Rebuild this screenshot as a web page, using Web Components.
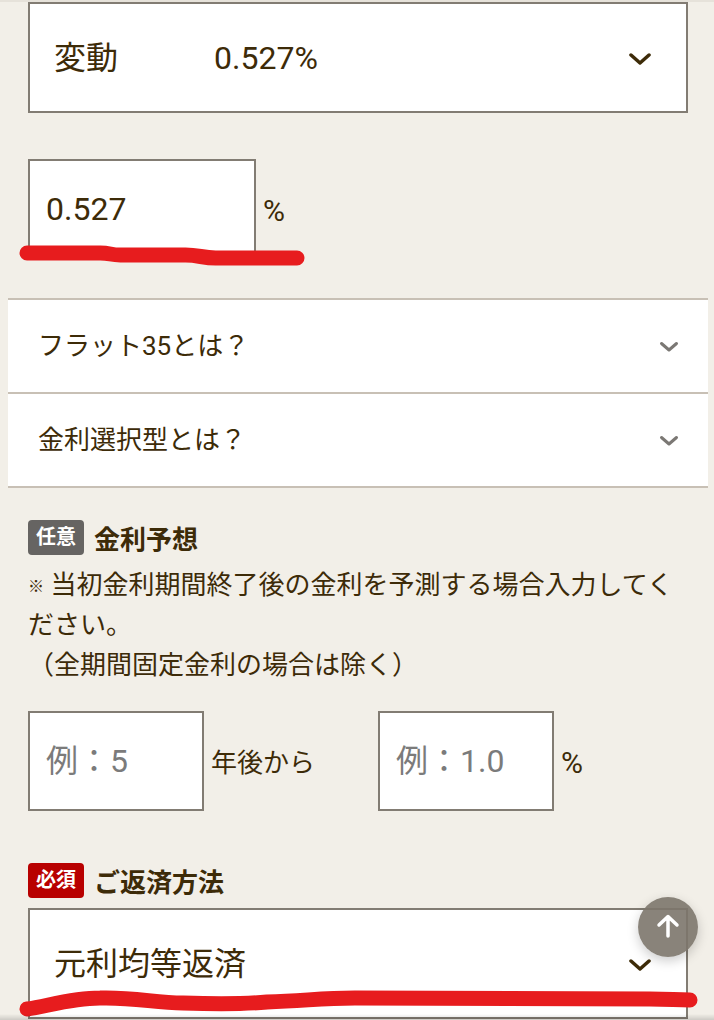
<!DOCTYPE html>
<html lang="ja">
<head>
<meta charset="utf-8">
<meta name="viewport" content="width=device-width, initial-scale=1">
<title>金利・ご返済方法</title>
<style>
  body {
    margin: 0;
    background-color: #f2efe8;
    color: #3d2b08;
    font-family: Roboto, "Noto Sans CJK JP", sans-serif;
    font-size: 26px;
    line-height: 40px;
  }
</style>
</head>
<body>
<loan-form></loan-form>
<page-top></page-top>

<script>
class FieldHeading extends HTMLElement {
  constructor() {
    super();
    this.attachShadow({ mode: 'open' });
  }

  connectedCallback() {
    const required = this.hasAttribute('required');
    this.shadowRoot.innerHTML = `
    <style>
      :host {
        display: flex;
        align-items: flex-start;
        gap: 10px;
        margin-bottom: 5px;
        font-weight: bold;
      }
      .badge {
        padding: 0 8px;
        border-radius: 4px;
        background-color: ${required ? '#b80000' : '#666462'};
        color: white;
        font-size: 20px;
        line-height: 35px;
      }
    </style>
    <span class="badge">${required ? '必須' : '任意'}</span>
    <slot></slot>
    `;
  }
}

class SelectBox extends HTMLElement {
  constructor() {
    super();
    this.attachShadow({ mode: 'open' });
  }

  connectedCallback() {
    const heading = this.getAttribute('heading');
    const options = this.getAttribute('options').split(',');
    this.shadowRoot.innerHTML = `
    <style>
      :host {
        display: block;
        position: relative;
      }
      .box {
        display: grid;
        align-items: center;
      }
      select, svg {
        grid-area: 1 / 1;
      }
      select {
        appearance: none;
        box-sizing: border-box;
        width: 100%;
        height: 111px;
        margin: 0;
        padding: 0 72px 0 24px;
        border: 2px solid #827c73;
        border-radius: 0;
        background-color: white;
        color: inherit;
        font: inherit;
        font-size: 32px;
      }
      svg {
        justify-self: end;
        margin-right: 36px;
        pointer-events: none;
      }
    </style>
    ${heading ? `<label for="select"><field-heading required>${heading}</field-heading></label>` : ''}
    <div class="box">
      <select id="select" ${heading ? '' : 'aria-label="金利タイプ"'}>
        ${options.map((option) => `<option>${option}</option>`).join('')}
      </select>
      <svg width="24" height="14" viewBox="0 0 24 14" fill="none" stroke="#3d2b08" stroke-width="3.500" stroke-linecap="round" stroke-linejoin="round">
        <path d="M3 4l9 8 9-8"/>
      </svg>
    </div>
    <slot></slot>
    `;
  }
}

class UnitInput extends HTMLElement {
  constructor() {
    super();
    this.attachShadow({ mode: 'open' });
  }

  connectedCallback() {
    this.shadowRoot.innerHTML = `
    <style>
      :host {
        display: block;
        position: relative;
      }
      label {
        display: flex;
        align-items: center;
        gap: 7px;
      }
      input {
        box-sizing: border-box;
        width: var(--input-width, 176px);
        height: 100px;
        margin: 0;
        padding: 0 16px;
        border: 2px solid #827c73;
        border-radius: 0;
        background-color: white;
        color: inherit;
        font: inherit;
        font-size: 32px;
      }
      input::placeholder {
        color: #7b7b7b;
      }
      span {
        padding-top: 3px;
      }
      .percent {
        font-size: 30px;
      }
    </style>
    <label>
      <input type="text" inputmode="decimal">
      <span></span>
    </label>
    <slot></slot>
    `;
    const input = this.shadowRoot.querySelector('input');
    const unit = this.shadowRoot.querySelector('span');
    input.value = this.getAttribute('value') || '';
    input.placeholder = this.getAttribute('placeholder') || '';
    unit.textContent = this.getAttribute('unit');
    unit.classList.toggle('percent', unit.textContent === '%');
  }
}

class HelpItem extends HTMLElement {
  constructor() {
    super();
    this.attachShadow({ mode: 'open' });
    this.shadowRoot.innerHTML = `
    <style>
      :host {
        display: block;
        border-bottom: 2px solid #c8c0b5;
      }
      button {
        display: flex;
        align-items: center;
        justify-content: space-between;
        width: 100%;
        padding: 26px 29px 26px 30px;
        border: 0;
        background-color: white;
        color: inherit;
        font: inherit;
        text-align: left;
        cursor: pointer;
      }
    </style>
    <button type="button" aria-expanded="false">
      <slot></slot>
      <svg width="20" height="12" viewBox="0 0 20 12" fill="none" stroke="#7b7874" stroke-width="3" stroke-linecap="round" stroke-linejoin="round">
        <path d="M2.500 3.500L10 10l7.500-6.500"/>
      </svg>
    </button>
    `;
  }
}

// Hand-drawn red marker, stretched over the element that holds it
class MarkerLine extends HTMLElement {
  constructor() {
    super();
    this.attachShadow({ mode: 'open' });
  }

  connectedCallback() {
    const long = this.hasAttribute('long');
    const path = long
      ? 'M7 12C25 10 50 1 80 1C115 0 135 6 163 6C195 7 225 7 247 5C285 4 300 1 335 1L630 2C650 2 655 3 670 3'
      : 'M7 6H80C90 6 90 8 100 8H165C178 8 182 11 195 11H276';
    this.shadowRoot.innerHTML = `
    <style>
      :host {
        position: absolute;
        left: -8px;
        bottom: ${long ? '2px' : '-8px'};
        width: ${long ? 'calc(100% + 18px)' : '285px'};
        height: 20px;
        pointer-events: none;
      }
      svg {
        display: block;
        width: 100%;
        height: 100%;
        overflow: visible;
      }
    </style>
    <svg viewBox="0 0 ${long ? 678 : 284} 20" preserveAspectRatio="none" fill="none" stroke="#e71c1e" stroke-width="15" stroke-linecap="round" stroke-linejoin="round">
      <path d="${path}"/>
    </svg>
    `;
  }
}

class PageTop extends HTMLElement {
  constructor() {
    super();
    this.attachShadow({ mode: 'open' });
    this.shadowRoot.innerHTML = `
    <style>
      :host {
        position: fixed;
        right: 16px;
        bottom: 63px;
      }
      button {
        display: flex;
        align-items: center;
        justify-content: center;
        width: 60px;
        height: 60px;
        padding: 0;
        border: 0;
        border-radius: 50%;
        background-color: rgba(124, 117, 108, 0.9);
        box-shadow: 0 4px 12px rgba(0, 0, 0, 0.2);
        cursor: pointer;
      }
    </style>
    <button type="button" aria-label="ページの先頭へ">
      <svg width="24" height="28" viewBox="0 0 24 28" fill="none" stroke="white" stroke-width="3.500" stroke-linecap="round" stroke-linejoin="round">
        <path d="M12 23V4M3 12l9-8.500 9 8.500"/>
      </svg>
    </button>
    `;
  }
}

class LoanForm extends HTMLElement {
  constructor() {
    super();
    this.attachShadow({ mode: 'open' });
    this.shadowRoot.innerHTML = `
    <style>
      :host {
        display: block;
        padding: 0 6px 0 8px;
        border-top: 2px solid #e6e2da;
      }
      /* soft shade along the lower edge of the window */
      :host::after {
        content: "";
        position: fixed;
        right: 0;
        bottom: 0;
        left: 0;
        height: 6px;
        background: linear-gradient(transparent, rgba(0, 0, 0, 0.15));
        pointer-events: none;
      }
      section {
        padding: 0 20px;
      }
      .rate {
        --input-width: 228px;
        margin: 46px 0 39px;
      }
      .help {
        margin-bottom: 32px;
        border-top: 2px solid #c8c0b5;
      }
      p {
        margin: 0 0 26px;
      }
      small {
        font-size: 16px;
        font-weight: 500;
        line-height: 16px;
        vertical-align: middle;
      }
      .forecast {
        display: grid;
        grid-template-columns: 1fr 1fr;
        gap: 40px;
        margin-bottom: 52px;
      }
    </style>
    <section>
      <select-box options="変動　　　0.527%"></select-box>
      <unit-input class="rate" value="0.527" unit="%">
        <marker-line></marker-line>
      </unit-input>
    </section>
    <div class="help">
      <help-item>フラット35とは？</help-item>
      <help-item>金利選択型とは？</help-item>
    </div>
    <section>
      <field-heading>金利予想</field-heading>
      <p><small>※</small> 当初金利期間終了後の金利を予測する場合入力してください。<br>（全期間固定金利の場合は除く）</p>
      <div class="forecast">
        <unit-input placeholder="例：5" unit="年後から"></unit-input>
        <unit-input placeholder="例：1.0" unit="%"></unit-input>
      </div>
      <select-box heading="ご返済方法" options="元利均等返済,元金均等返済">
        <marker-line long></marker-line>
      </select-box>
    </section>
    `;
  }
}

customElements.define('field-heading', FieldHeading);
customElements.define('select-box', SelectBox);
customElements.define('unit-input', UnitInput);
customElements.define('help-item', HelpItem);
customElements.define('marker-line', MarkerLine);
customElements.define('page-top', PageTop);
customElements.define('loan-form', LoanForm);
</script>
</body>
</html>
